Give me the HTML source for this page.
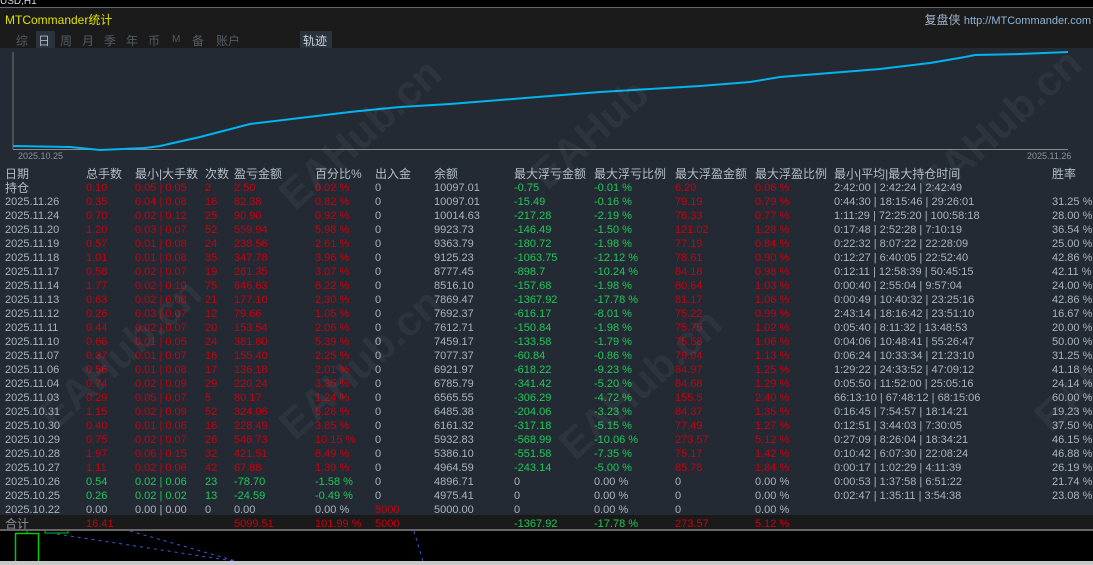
<!DOCTYPE html>
<html><head><meta charset="utf-8"><style>
*{margin:0;padding:0;box-sizing:border-box}
body{width:1093px;height:565px;background:#000;overflow:hidden;position:relative;font-family:"Liberation Sans","Noto Sans CJK SC",sans-serif;font-size:11px}
.abs{position:absolute}
#hdr{left:0;top:7px;width:1093px;height:41px;background:#1b1b1b;border-top:1px solid #666}
#body{left:0;top:48px;width:1093px;height:467px;background:#232a33}
#tot{left:0;top:515px;width:1093px;height:14px;background:#1a1a1a}
table{position:absolute;left:5px;top:167px;border-collapse:collapse;table-layout:fixed;width:1088px}
td{height:14px;line-height:14px;padding:0;white-space:nowrap;overflow:visible;color:#a9b4c0;font-size:11px}
.r td.c{color:#c8000f}
.g{color:#1fc85a!important}
.rd{color:#c8000f!important}
.h td{color:#b4bec9;font-size:12px}
.tab{position:absolute;top:32px;color:#555c64;font-size:12px}
.wm{position:absolute;color:rgba(255,255,255,0.05);font-weight:bold;font-size:42px;transform:rotate(-42deg);white-space:nowrap;font-family:"Liberation Sans",sans-serif}
</style></head><body>
<div class="abs" style="left:0;top:-4px;color:#ddd;font-size:10px">USD,H1</div>
<div class="abs" id="hdr"></div>
<div class="abs" style="left:5px;top:11px;color:#e0e000;font-size:12px">MTCommander统计</div>
<div class="abs" style="right:2px;top:11px;color:#8fb4d8;font-size:12px"><span style="color:#9fb3c8">复盘侠</span> <span style="font-size:11px">http://MTCommander.com</span></div>
<div class="tab" style="left:16px">综</div>
<div class="abs" style="left:36px;top:31px;width:19px;height:17px;background:#2a323c"></div>
<div class="tab" style="left:38px;color:#aab4bf">日</div>
<div class="tab" style="left:60px">周</div>
<div class="tab" style="left:82px">月</div>
<div class="tab" style="left:104px">季</div>
<div class="tab" style="left:126px">年</div>
<div class="tab" style="left:148px">币</div>
<div class="tab" style="left:172px;font-size:10px;top:34px">M</div>
<div class="tab" style="left:192px">备</div>
<div class="tab" style="left:216px">账户</div>
<div class="abs" style="left:300px;top:31px;width:32px;height:17px;background:#2a323c"></div>
<div class="tab" style="left:303px;color:#ccd4dc">轨迹</div>
<div class="abs" id="body"></div>
<svg class="abs" style="left:0;top:0" width="1093" height="170">
<line x1="13" y1="52" x2="13" y2="149" stroke="#777" stroke-width="1"/>
<line x1="13" y1="149.5" x2="1068" y2="149.5" stroke="#888" stroke-width="1"/>
<polyline fill="none" stroke="#00b4f0" stroke-width="2" points="13,146 70,147 100,150 145,148 160,146 200,137 250,124 300,118 350,112 400,107 450,104 500,100 550,96 600,92 650,89 700,86 750,82 780,77 830,73 880,69 930,63 965,57 975,55 1020,54 1068,52"/>
<text x="18" y="159" fill="#8a939c" font-size="9" font-family="Liberation Sans">2025.10.25</text>
<text x="1027" y="159" fill="#8a939c" font-size="9" font-family="Liberation Sans">2025.11.26</text>
</svg>
<div class="abs" id="tot"></div>
<table>
<colgroup><col style="width:81px"><col style="width:49px"><col style="width:70px"><col style="width:29px"><col style="width:81px"><col style="width:60px"><col style="width:59px"><col style="width:80px"><col style="width:80px"><col style="width:81px"><col style="width:80px"><col style="width:79px"><col style="width:218px"><col style="width:42px"></colgroup>
<tr class="h"><td>日期</td><td>总手数</td><td>最小|大手数</td><td>次数</td><td>盈亏金额</td><td>百分比%</td><td>出入金</td><td>余额</td><td>最大浮亏金额</td><td>最大浮亏比例</td><td>最大浮盈金额</td><td>最大浮盈比例</td><td>最小|平均|最大持仓时间</td><td>胜率</td></tr>
<tr class="r"><td style="font-size:12px;color:#b4bec9">持仓</td><td class="c">0.10</td><td class="c">0.05 | 0.05</td><td class="c">2</td><td class="c">2.50</td><td class="c">0.02 %</td><td>0</td><td>10097.01</td><td class="g">-0.75</td><td class="g">-0.01 %</td><td class="c">6.20</td><td class="c">0.06 %</td><td>2:42:00 | 2:42:24 | 2:42:49</td><td></td></tr>
<tr class="r"><td>2025.11.26</td><td class="c">0.35</td><td class="c">0.04 | 0.08</td><td class="c">16</td><td class="c">82.38</td><td class="c">0.82 %</td><td>0</td><td>10097.01</td><td class="g">-15.49</td><td class="g">-0.16 %</td><td class="c">79.19</td><td class="c">0.79 %</td><td>0:44:30 | 18:15:46 | 29:26:01</td><td>31.25 %</td></tr>
<tr class="r"><td>2025.11.24</td><td class="c">0.70</td><td class="c">0.02 | 0.12</td><td class="c">25</td><td class="c">90.90</td><td class="c">0.92 %</td><td>0</td><td>10014.63</td><td class="g">-217.28</td><td class="g">-2.19 %</td><td class="c">76.33</td><td class="c">0.77 %</td><td>1:11:29 | 72:25:20 | 100:58:18</td><td>28.00 %</td></tr>
<tr class="r"><td>2025.11.20</td><td class="c">1.20</td><td class="c">0.03 | 0.07</td><td class="c">52</td><td class="c">559.94</td><td class="c">5.98 %</td><td>0</td><td>9923.73</td><td class="g">-146.49</td><td class="g">-1.50 %</td><td class="c">121.02</td><td class="c">1.28 %</td><td>0:17:48 | 2:52:28 | 7:10:19</td><td>36.54 %</td></tr>
<tr class="r"><td>2025.11.19</td><td class="c">0.57</td><td class="c">0.01 | 0.08</td><td class="c">24</td><td class="c">238.56</td><td class="c">2.61 %</td><td>0</td><td>9363.79</td><td class="g">-180.72</td><td class="g">-1.98 %</td><td class="c">77.19</td><td class="c">0.84 %</td><td>0:22:32 | 8:07:22 | 22:28:09</td><td>25.00 %</td></tr>
<tr class="r"><td>2025.11.18</td><td class="c">1.01</td><td class="c">0.01 | 0.08</td><td class="c">35</td><td class="c">347.78</td><td class="c">3.96 %</td><td>0</td><td>9125.23</td><td class="g">-1063.75</td><td class="g">-12.12 %</td><td class="c">78.61</td><td class="c">0.90 %</td><td>0:12:27 | 6:40:05 | 22:52:40</td><td>42.86 %</td></tr>
<tr class="r"><td>2025.11.17</td><td class="c">0.58</td><td class="c">0.02 | 0.07</td><td class="c">19</td><td class="c">261.35</td><td class="c">3.07 %</td><td>0</td><td>8777.45</td><td class="g">-898.7</td><td class="g">-10.24 %</td><td class="c">84.18</td><td class="c">0.98 %</td><td>0:12:11 | 12:58:39 | 50:45:15</td><td>42.11 %</td></tr>
<tr class="r"><td>2025.11.14</td><td class="c">1.77</td><td class="c">0.02 | 0.10</td><td class="c">75</td><td class="c">646.63</td><td class="c">8.22 %</td><td>0</td><td>8516.10</td><td class="g">-157.68</td><td class="g">-1.98 %</td><td class="c">80.64</td><td class="c">1.03 %</td><td>0:00:40 | 2:55:04 | 9:57:04</td><td>24.00 %</td></tr>
<tr class="r"><td>2025.11.13</td><td class="c">0.63</td><td class="c">0.02 | 0.08</td><td class="c">21</td><td class="c">177.10</td><td class="c">2.30 %</td><td>0</td><td>7869.47</td><td class="g">-1367.92</td><td class="g">-17.78 %</td><td class="c">81.17</td><td class="c">1.06 %</td><td>0:00:49 | 10:40:32 | 23:25:16</td><td>42.86 %</td></tr>
<tr class="r"><td>2025.11.12</td><td class="c">0.26</td><td class="c">0.03 | 0.07</td><td class="c">12</td><td class="c">79.66</td><td class="c">1.05 %</td><td>0</td><td>7692.37</td><td class="g">-616.17</td><td class="g">-8.01 %</td><td class="c">75.22</td><td class="c">0.99 %</td><td>2:43:14 | 18:16:42 | 23:51:10</td><td>16.67 %</td></tr>
<tr class="r"><td>2025.11.11</td><td class="c">0.44</td><td class="c">0.02 | 0.07</td><td class="c">20</td><td class="c">153.54</td><td class="c">2.06 %</td><td>0</td><td>7612.71</td><td class="g">-150.84</td><td class="g">-1.98 %</td><td class="c">75.75</td><td class="c">1.02 %</td><td>0:05:40 | 8:11:32 | 13:48:53</td><td>20.00 %</td></tr>
<tr class="r"><td>2025.11.10</td><td class="c">0.66</td><td class="c">0.01 | 0.05</td><td class="c">24</td><td class="c">381.80</td><td class="c">5.39 %</td><td>0</td><td>7459.17</td><td class="g">-133.58</td><td class="g">-1.79 %</td><td class="c">75.58</td><td class="c">1.06 %</td><td>0:04:06 | 10:48:41 | 55:26:47</td><td>50.00 %</td></tr>
<tr class="r"><td>2025.11.07</td><td class="c">0.37</td><td class="c">0.01 | 0.07</td><td class="c">16</td><td class="c">155.40</td><td class="c">2.25 %</td><td>0</td><td>7077.37</td><td class="g">-60.84</td><td class="g">-0.86 %</td><td class="c">79.04</td><td class="c">1.13 %</td><td>0:06:24 | 10:33:34 | 21:23:10</td><td>31.25 %</td></tr>
<tr class="r"><td>2025.11.06</td><td class="c">0.56</td><td class="c">0.01 | 0.08</td><td class="c">17</td><td class="c">136.18</td><td class="c">2.01 %</td><td>0</td><td>6921.97</td><td class="g">-618.22</td><td class="g">-9.23 %</td><td class="c">84.97</td><td class="c">1.25 %</td><td>1:29:22 | 24:33:52 | 47:09:12</td><td>41.18 %</td></tr>
<tr class="r"><td>2025.11.04</td><td class="c">0.74</td><td class="c">0.02 | 0.09</td><td class="c">29</td><td class="c">220.24</td><td class="c">3.35 %</td><td>0</td><td>6785.79</td><td class="g">-341.42</td><td class="g">-5.20 %</td><td class="c">84.68</td><td class="c">1.29 %</td><td>0:05:50 | 11:52:00 | 25:05:16</td><td>24.14 %</td></tr>
<tr class="r"><td>2025.11.03</td><td class="c">0.29</td><td class="c">0.05 | 0.07</td><td class="c">5</td><td class="c">80.17</td><td class="c">1.24 %</td><td>0</td><td>6565.55</td><td class="g">-306.29</td><td class="g">-4.72 %</td><td class="c">155.5</td><td class="c">2.40 %</td><td>66:13:10 | 67:48:12 | 68:15:06</td><td>60.00 %</td></tr>
<tr class="r"><td>2025.10.31</td><td class="c">1.15</td><td class="c">0.02 | 0.09</td><td class="c">52</td><td class="c">324.06</td><td class="c">5.26 %</td><td>0</td><td>6485.38</td><td class="g">-204.06</td><td class="g">-3.23 %</td><td class="c">84.37</td><td class="c">1.35 %</td><td>0:16:45 | 7:54:57 | 18:14:21</td><td>19.23 %</td></tr>
<tr class="r"><td>2025.10.30</td><td class="c">0.40</td><td class="c">0.01 | 0.06</td><td class="c">16</td><td class="c">228.49</td><td class="c">3.85 %</td><td>0</td><td>6161.32</td><td class="g">-317.18</td><td class="g">-5.15 %</td><td class="c">77.49</td><td class="c">1.27 %</td><td>0:12:51 | 3:44:03 | 7:30:05</td><td>37.50 %</td></tr>
<tr class="r"><td>2025.10.29</td><td class="c">0.75</td><td class="c">0.02 | 0.07</td><td class="c">26</td><td class="c">546.73</td><td class="c">10.15 %</td><td>0</td><td>5932.83</td><td class="g">-568.99</td><td class="g">-10.06 %</td><td class="c">273.57</td><td class="c">5.12 %</td><td>0:27:09 | 8:26:04 | 18:34:21</td><td>46.15 %</td></tr>
<tr class="r"><td>2025.10.28</td><td class="c">1.97</td><td class="c">0.06 | 0.15</td><td class="c">32</td><td class="c">421.51</td><td class="c">8.49 %</td><td>0</td><td>5386.10</td><td class="g">-551.58</td><td class="g">-7.35 %</td><td class="c">75.17</td><td class="c">1.42 %</td><td>0:10:42 | 6:07:30 | 22:08:24</td><td>46.88 %</td></tr>
<tr class="r"><td>2025.10.27</td><td class="c">1.11</td><td class="c">0.02 | 0.06</td><td class="c">42</td><td class="c">67.88</td><td class="c">1.39 %</td><td>0</td><td>4964.59</td><td class="g">-243.14</td><td class="g">-5.00 %</td><td class="c">85.78</td><td class="c">1.84 %</td><td>0:00:17 | 1:02:29 | 4:11:39</td><td>26.19 %</td></tr>
<tr><td>2025.10.26</td><td class="g">0.54</td><td class="g">0.02 | 0.06</td><td class="g">23</td><td class="g">-78.70</td><td class="g">-1.58 %</td><td>0</td><td>4896.71</td><td>0</td><td>0.00 %</td><td>0</td><td>0.00 %</td><td>0:00:53 | 1:37:58 | 6:51:22</td><td>21.74 %</td></tr>
<tr><td>2025.10.25</td><td class="g">0.26</td><td class="g">0.02 | 0.02</td><td class="g">13</td><td class="g">-24.59</td><td class="g">-0.49 %</td><td>0</td><td>4975.41</td><td>0</td><td>0.00 %</td><td>0</td><td>0.00 %</td><td>0:02:47 | 1:35:11 | 3:54:38</td><td>23.08 %</td></tr>
<tr><td>2025.10.22</td><td>0.00</td><td>0.00 | 0.00</td><td>0</td><td>0.00</td><td>0.00 %</td><td class="rd">5000</td><td>5000.00</td><td>0</td><td>0.00 %</td><td>0</td><td>0.00 %</td><td></td><td></td></tr>
<tr><td style="font-size:12px;color:#8a939c">合计</td><td class="rd">16.41</td><td></td><td></td><td class="rd">5099.51</td><td class="rd">101.99 %</td><td class="rd">5000</td><td></td><td class="g">-1367.92</td><td class="g">-17.78 %</td><td class="rd">273.57</td><td class="rd">5.12 %</td><td></td><td></td></tr>
</table>
<div class="abs" style="left:0;top:529px;width:1093px;height:2px;background:#666"></div>
<svg class="abs" style="left:0;top:531px" width="1093" height="34">
<rect x="15.5" y="2.5" width="23" height="32" fill="none" stroke="#0c0" stroke-width="1.5"/>
<line x1="27" y1="0" x2="27" y2="3" stroke="#0c0"/>
<polyline points="45,0 45,2 68,2 68,0" fill="none" stroke="#0c0"/>
<line x1="50" y1="2" x2="260" y2="34" stroke="#3a5cd0" stroke-dasharray="3,4"/>
<line x1="130" y1="0" x2="250" y2="34" stroke="#3a5cd0" stroke-dasharray="3,4"/>
<line x1="414" y1="0" x2="424" y2="34" stroke="#3a5cd0" stroke-dasharray="3,4"/>
<rect x="0" y="30" width="1093" height="4" fill="#c8c8c8"/>
</svg>
<div class="wm" style="left:260px;top:110px">EAHub.cn</div>
<div class="wm" style="left:520px;top:110px">EAHub</div>
<div class="wm" style="left:900px;top:100px">EAHub.cn</div>
<div class="wm" style="left:20px;top:330px">EAHub.cn</div>
<div class="wm" style="left:260px;top:340px">EAHub.cn</div>
<div class="wm" style="left:540px;top:360px">EAHub.cn</div>
<div class="wm" style="left:1030px;top:370px">EAH</div>
</body></html>
